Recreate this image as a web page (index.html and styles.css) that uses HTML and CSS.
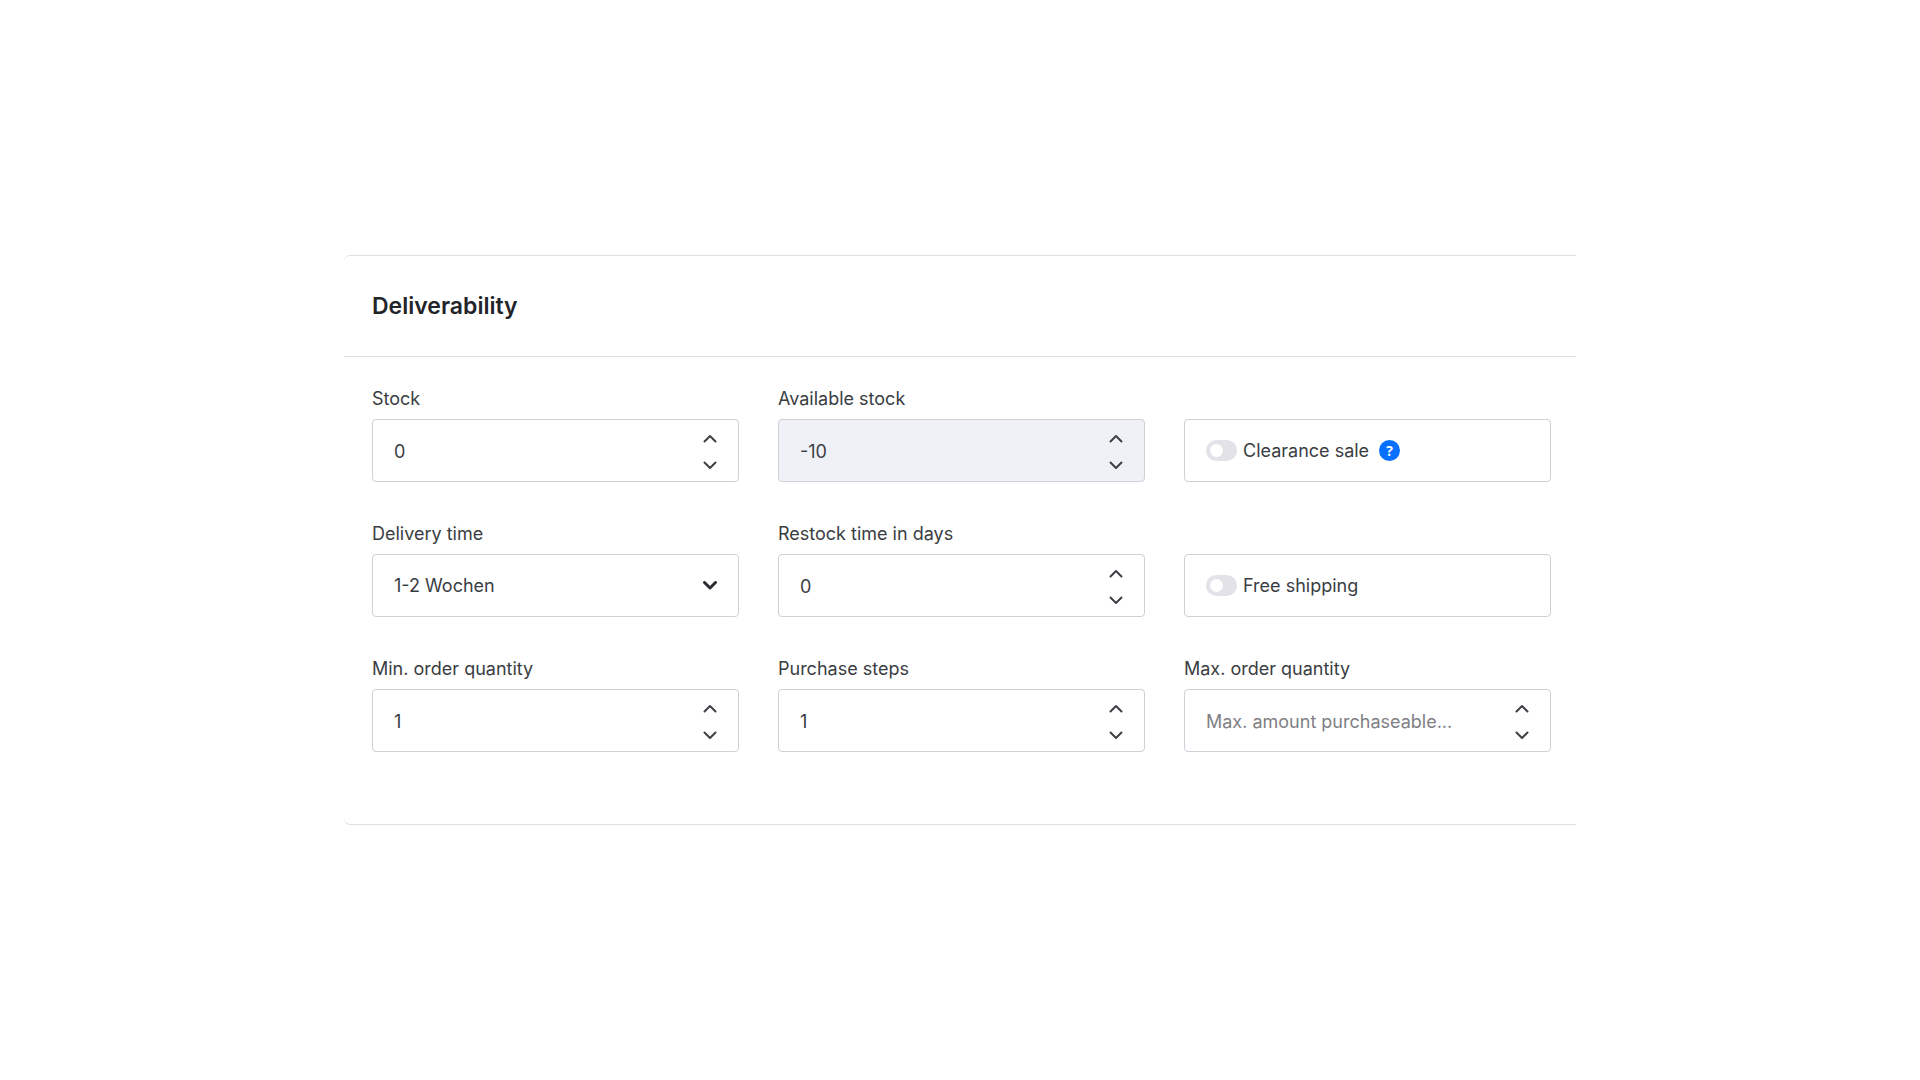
FILE: index.html
```
<!DOCTYPE html>
<html lang="en">
<head>
  <meta charset="UTF-8">
  <meta name="viewport" content="width=device-width, initial-scale=1.0">
  <title>Deliverability</title>
  <link rel="stylesheet" href="styles.css">
</head>
<body>

  <svg class="sprite" aria-hidden="true">
    <symbol id="chevron-up" viewBox="0 0 14 9"><path d="M1.5 7.5 L7 2 L12.5 7.5"/></symbol>
    <symbol id="chevron-down" viewBox="0 0 14 9"><path d="M1.5 1.5 L7 7 L12.5 1.5"/></symbol>
  </svg>

  <form class="card">
    <div class="card-header">
      <h2 class="card-title">Deliverability</h2>
    </div>

    <div class="card-content">
      <div class="field">
        <label for="stock">Stock</label>
        <div class="box number-box">
          <input type="number" id="stock" name="stock" value="0">
          <div class="steps">
            <button type="button" data-step="up" aria-label="Increase"><svg class="icon"><use href="#chevron-up"/></svg></button>
            <button type="button" data-step="down" aria-label="Decrease"><svg class="icon"><use href="#chevron-down"/></svg></button>
          </div>
        </div>
      </div>

      <div class="field">
        <label for="availableStock">Available stock</label>
        <div class="box number-box disabled">
          <input type="number" id="availableStock" name="availableStock" value="-10" disabled>
          <div class="steps">
            <button type="button" aria-label="Increase" disabled><svg class="icon"><use href="#chevron-up"/></svg></button>
            <button type="button" aria-label="Decrease" disabled><svg class="icon"><use href="#chevron-down"/></svg></button>
          </div>
        </div>
      </div>

      <div class="field">
        <div class="box switch-box">
          <input type="checkbox" class="switch" id="clearanceSale" name="clearanceSale">
          <label for="clearanceSale">Clearance sale</label>
          <button type="button" class="help" aria-label="Help">?</button>
        </div>
      </div>

      <div class="field">
        <label for="deliveryTime">Delivery time</label>
        <div class="box select-box">
          <select id="deliveryTime" name="deliveryTime">
            <option value="1-2-weeks">1-2 Wochen</option>
          </select>
          <svg class="icon icon-bold"><use href="#chevron-down"/></svg>
        </div>
      </div>

      <div class="field">
        <label for="restockTime">Restock time in days</label>
        <div class="box number-box">
          <input type="number" id="restockTime" name="restockTime" value="0">
          <div class="steps">
            <button type="button" data-step="up" aria-label="Increase"><svg class="icon"><use href="#chevron-up"/></svg></button>
            <button type="button" data-step="down" aria-label="Decrease"><svg class="icon"><use href="#chevron-down"/></svg></button>
          </div>
        </div>
      </div>

      <div class="field">
        <div class="box switch-box">
          <input type="checkbox" class="switch" id="freeShipping" name="freeShipping">
          <label for="freeShipping">Free shipping</label>
        </div>
      </div>

      <div class="field">
        <label for="minOrder">Min. order quantity</label>
        <div class="box number-box">
          <input type="number" id="minOrder" name="minOrder" value="1">
          <div class="steps">
            <button type="button" data-step="up" aria-label="Increase"><svg class="icon"><use href="#chevron-up"/></svg></button>
            <button type="button" data-step="down" aria-label="Decrease"><svg class="icon"><use href="#chevron-down"/></svg></button>
          </div>
        </div>
      </div>

      <div class="field">
        <label for="purchaseSteps">Purchase steps</label>
        <div class="box number-box">
          <input type="number" id="purchaseSteps" name="purchaseSteps" value="1">
          <div class="steps">
            <button type="button" data-step="up" aria-label="Increase"><svg class="icon"><use href="#chevron-up"/></svg></button>
            <button type="button" data-step="down" aria-label="Decrease"><svg class="icon"><use href="#chevron-down"/></svg></button>
          </div>
        </div>
      </div>

      <div class="field">
        <label for="maxOrder">Max. order quantity</label>
        <div class="box number-box">
          <input type="number" id="maxOrder" name="maxOrder" placeholder="Max. amount purchaseable...">
          <div class="steps">
            <button type="button" data-step="up" aria-label="Increase"><svg class="icon"><use href="#chevron-up"/></svg></button>
            <button type="button" data-step="down" aria-label="Decrease"><svg class="icon"><use href="#chevron-down"/></svg></button>
          </div>
        </div>
      </div>
    </div>
  </form>

  <script>
    // Arrow buttons change the number next to them
    document.querySelectorAll("[data-step]").forEach(function (button) {
      button.addEventListener("click", function () {
        var input = button.closest(".number-box").querySelector("input");
        if (button.dataset.step === "up") {
          input.stepUp();
        } else {
          input.stepDown();
        }
      });
    });
  </script>
</body>
</html>
```
FILE: styles.css
```
* {
  box-sizing: border-box;
}

body {
  margin: 0;
  min-height: 100vh;
  display: flex;
  align-items: center;
  justify-content: center;
  background-color: #fff;
  color: #3a3d42;
  font-family: Inter, "Liberation Sans", sans-serif;
  font-size: 18px;
  line-height: 24px;
}

.sprite {
  position: absolute;
  width: 0;
  height: 0;
}

.card {
  width: 100%;
  max-width: 1232px;
  border-top: 1px solid #dedee7;
  border-bottom: 1px solid #dedee7;
  border-radius: 6px 0 0 6px;
}

.card-header {
  padding: 35px 28px;
  border-bottom: 1px solid #dcdce5;
}

.card-title {
  margin: 0;
  color: #222429;
  font-size: 23px;
  font-weight: 600;
  line-height: 30px;
}

.card-content {
  display: grid;
  grid-template-columns: repeat(3, 1fr);
  gap: 40px 39px;
  padding: 30px 25px 72px 28px;
}

.field {
  display: flex;
  flex-direction: column;
  justify-content: flex-end;
  gap: 8px;
  min-width: 0;
}

.box {
  display: flex;
  align-items: center;
  height: 63px;
  padding: 0 21px;
  border: 1px solid #cfd0d8;
  border-radius: 4px;
}

.number-box {
  padding-top: 2px;
}

.disabled {
  background-color: #f0f1f7;
}

.box input[type="number"],
.box select {
  flex: 1;
  min-width: 0;
  height: 100%;
  padding: 0;
  border: none;
  outline: none;
  background: none;
  color: inherit;
  font: inherit;
  appearance: none;
  -moz-appearance: textfield;
}

.box input::-webkit-inner-spin-button,
.box input::-webkit-outer-spin-button {
  margin: 0;
  -webkit-appearance: none;
}

.box input::placeholder {
  color: #808085;
  opacity: 1;
}

.steps {
  display: flex;
  flex-direction: column;
}

.steps button {
  display: flex;
  align-items: center;
  justify-content: center;
  height: 27px;
  padding: 0;
  border: none;
  background: none;
  color: inherit;
  cursor: pointer;
}

.icon {
  display: block;
  width: 14px;
  height: 9px;
  fill: none;
  stroke: #3e4045;
  stroke-width: 2;
  stroke-linecap: round;
  stroke-linejoin: round;
}

.icon-bold {
  stroke: #2b2d32;
  stroke-width: 3;
  pointer-events: none;
}

.switch {
  appearance: none;
  width: 31px;
  height: 21px;
  margin: 0 6px 0 0;
  padding: 4px;
  border-radius: 11px;
  background-color: #e2e2e8;
  cursor: pointer;
}

.switch::before {
  content: "";
  display: block;
  width: 13px;
  height: 13px;
  border-radius: 50%;
  background-color: #fff;
}

.switch:checked {
  background-color: #0870ff;
}

.switch:checked::before {
  margin-left: auto;
}

.help {
  width: 21px;
  height: 21px;
  margin-left: 10px;
  padding: 0;
  border: none;
  border-radius: 50%;
  background-color: #0870ff;
  color: #fff;
  font-family: "Open Sans", sans-serif;
  font-size: 14px;
  font-weight: 700;
  line-height: 21px;
  text-align: center;
}
```
